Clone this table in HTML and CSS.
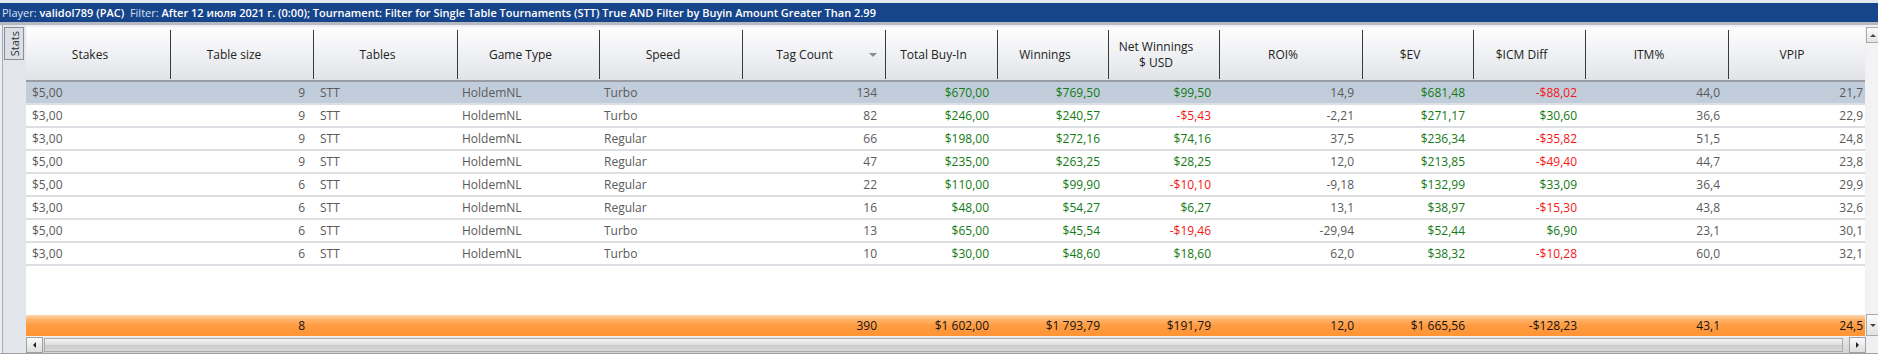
FILE: index.html
```html
<!DOCTYPE html>
<html>
<head>
<meta charset="utf-8">
<link rel="stylesheet" href="styles.css">
</head>
<body>
<div class="app">
  <div class="topstrip"></div>
  <div class="titlebar"><span class="k">Player:</span> <b>validol789 (PAC)</b>&nbsp;&nbsp;<span class="k">Filter:</span> <b>After 12 июля 2021 г. (0:00); Tournament: Filter for Single Table Tournaments (STT) True AND Filter by Buyin Amount Greater Than 2.99</b></div>
  <div class="main">
    <div class="sidebar"><div class="tab"><span>Stats</span></div></div>
    <div class="gridwrap">
      <div class="gridarea">
        <div class="table">
          <div class="row head">
            <div class="h">Stakes</div>
            <div class="h">Table size</div>
            <div class="h">Tables</div>
            <div class="h">Game Type</div>
            <div class="h">Speed</div>
            <div class="h sort">Tag Count<i class="arrow"></i></div>
            <div class="h">Total Buy-In</div>
            <div class="h">Winnings</div>
            <div class="h">Net Winnings<br>$ USD</div>
            <div class="h">ROI%</div>
            <div class="h">$EV</div>
            <div class="h">$ICM Diff</div>
            <div class="h">ITM%</div>
            <div class="h last">VPIP</div>
          </div>

          <div class="row data sel">
            <div class="t">$5,00</div><div class="n">9</div><div class="t">STT</div><div class="t p4">HoldemNL</div><div class="t p4">Turbo</div><div class="n">134</div>
            <div class="n g">$670,00</div><div class="n g">$769,50</div><div class="n g">$99,50</div><div class="n">14,9</div><div class="n g">$681,48</div><div class="n r">-$88,02</div><div class="n">44,0</div><div class="n">21,7</div>
          </div>
          <div class="row data">
            <div class="t">$3,00</div><div class="n">9</div><div class="t">STT</div><div class="t p4">HoldemNL</div><div class="t p4">Turbo</div><div class="n">82</div>
            <div class="n g">$246,00</div><div class="n g">$240,57</div><div class="n r">-$5,43</div><div class="n">-2,21</div><div class="n g">$271,17</div><div class="n g">$30,60</div><div class="n">36,6</div><div class="n">22,9</div>
          </div>
          <div class="row data">
            <div class="t">$3,00</div><div class="n">9</div><div class="t">STT</div><div class="t p4">HoldemNL</div><div class="t p4">Regular</div><div class="n">66</div>
            <div class="n g">$198,00</div><div class="n g">$272,16</div><div class="n g">$74,16</div><div class="n">37,5</div><div class="n g">$236,34</div><div class="n r">-$35,82</div><div class="n">51,5</div><div class="n">24,8</div>
          </div>
          <div class="row data">
            <div class="t">$5,00</div><div class="n">9</div><div class="t">STT</div><div class="t p4">HoldemNL</div><div class="t p4">Regular</div><div class="n">47</div>
            <div class="n g">$235,00</div><div class="n g">$263,25</div><div class="n g">$28,25</div><div class="n">12,0</div><div class="n g">$213,85</div><div class="n r">-$49,40</div><div class="n">44,7</div><div class="n">23,8</div>
          </div>
          <div class="row data">
            <div class="t">$5,00</div><div class="n">6</div><div class="t">STT</div><div class="t p4">HoldemNL</div><div class="t p4">Regular</div><div class="n">22</div>
            <div class="n g">$110,00</div><div class="n g">$99,90</div><div class="n r">-$10,10</div><div class="n">-9,18</div><div class="n g">$132,99</div><div class="n g">$33,09</div><div class="n">36,4</div><div class="n">29,9</div>
          </div>
          <div class="row data">
            <div class="t">$3,00</div><div class="n">6</div><div class="t">STT</div><div class="t p4">HoldemNL</div><div class="t p4">Regular</div><div class="n">16</div>
            <div class="n g">$48,00</div><div class="n g">$54,27</div><div class="n g">$6,27</div><div class="n">13,1</div><div class="n g">$38,97</div><div class="n r">-$15,30</div><div class="n">43,8</div><div class="n">32,6</div>
          </div>
          <div class="row data">
            <div class="t">$5,00</div><div class="n">6</div><div class="t">STT</div><div class="t p4">HoldemNL</div><div class="t p4">Turbo</div><div class="n">13</div>
            <div class="n g">$65,00</div><div class="n g">$45,54</div><div class="n r">-$19,46</div><div class="n">-29,94</div><div class="n g">$52,44</div><div class="n g">$6,90</div><div class="n">23,1</div><div class="n">30,1</div>
          </div>
          <div class="row data">
            <div class="t">$3,00</div><div class="n">6</div><div class="t">STT</div><div class="t p4">HoldemNL</div><div class="t p4">Turbo</div><div class="n">10</div>
            <div class="n g">$30,00</div><div class="n g">$48,60</div><div class="n g">$18,60</div><div class="n">62,0</div><div class="n g">$38,32</div><div class="n r">-$10,28</div><div class="n">60,0</div><div class="n">32,1</div>
          </div>

          <div class="fill"></div>

          <div class="row foot">
            <div></div><div class="n">8</div><div></div><div></div><div></div><div class="n">390</div>
            <div class="n">$1&nbsp;602,00</div><div class="n">$1&nbsp;793,79</div><div class="n">$191,79</div><div class="n">12,0</div><div class="n">$1&nbsp;665,56</div><div class="n">-$128,23</div><div class="n">43,1</div><div class="n">24,5</div>
          </div>
        </div>
        <div class="vscroll">
          <div class="vbtn"><i class="tri up"></i></div>
          <div class="vtrack"></div>
          <div class="vbtn down"><i class="tri dn"></i></div>
        </div>
      </div>
      <div class="hscroll">
        <div class="hbtn"><i class="tri lf"></i></div>
        <div class="thumb"></div>
        <div class="hbtn"><i class="tri rt"></i></div>
      </div>
    </div>
  </div>
</div>
</body>
</html>
```

FILE: styles.css
```css
* { box-sizing: border-box; margin: 0; padding: 0; }
html, body { width: 1878px; height: 354px; overflow: hidden; }
body {
  background: #eceef2;
  font-family: "Open Sans", "Noto Sans", sans-serif;
  font-size: 12px;
  color: #5a5a5a;
}
.app { display: flex; flex-direction: column; height: 354px; }
.topstrip { height: 3px; background: #e4e8ee; flex: none; }
.titlebar {
  flex: none;
  height: 22px;
  background: #17458b;
  border-bottom: 3px solid #b6bac0;
  color: #fff;
  font-size: 11px;
  line-height: 19px;
  padding-left: 2px;
  white-space: nowrap;
  overflow: hidden;
}
.titlebar .k { color: #d6e0f0; font-weight: 400; }
.titlebar b { font-weight: 600; }

.main { display: flex; flex: 1; min-height: 0; border-bottom: 1px solid #9c9fa4; }
.sidebar {
  flex: none;
  width: 24px;
  margin-left: 2px;
  border-left: 1px solid #a9adb3;
  background: #e3e6eb;
  padding: 2px 0 0 1px;
}
.tab {
  width: 20px;
  height: 33px;
  border: 1px solid #8c9096;
  background: #dcdfe5;
  display: flex;
  align-items: center;
  justify-content: center;
}
.tab span {
  writing-mode: vertical-rl;
  transform: rotate(180deg);
  font-size: 11px;
  line-height: 1;
  color: #333;
}

.gridwrap { flex: 1; min-width: 0; display: flex; flex-direction: column; padding-top: 2px; background: #eef0f3; }
.gridarea { display: flex; gap: 1px; height: 309px; flex: none; }
.table { flex: 1; min-width: 0; display: flex; flex-direction: column; background: #fff; overflow: hidden; }

.row {
  display: grid;
  grid-template-columns: 145px 143px 144px 142px 143px 143px 112px 111px 111px 143px 111px 112px 143px 143px;
  flex: none;
}
.head {
  height: 55px;
  border-bottom: 2px solid #999ca2;
  background: linear-gradient(#fefefe, #f3f4f6 40%, #e1e3e7);
}
.head .h {
  position: relative;
  display: flex;
  align-items: center;
  justify-content: center;
  text-align: center;
  color: #222;
  line-height: 16px;
  padding: 2px 17px 0 0;
}
.head .h::after {
  content: "";
  position: absolute;
  right: 0;
  top: 3px;
  bottom: 1px;
  width: 1px;
  background: #3a3a3a;
}
.head .h.last::after { display: none; }
.head .sort { padding-right: 20px; }
.arrow {
  position: absolute;
  right: 9px;
  top: 26px;
  width: 0;
  height: 0;
  border-left: 4px solid transparent;
  border-right: 4px solid transparent;
  border-top: 4px solid #8c8c8c;
}

.data { height: 23px; border-bottom: 2px solid #dcdfe3; }
.data > div, .foot > div { white-space: nowrap; line-height: 21px; overflow: hidden; }
.t { padding-left: 6px; }
.t.p4 { padding-left: 4px; }
.n { text-align: right; padding-right: 9px; }
.g { color: #137a13; }
.r { color: #f51515; }
.sel { background: #c1cdda; }

.fill { flex: 1; }
.foot {
  height: 21px;
  background: linear-gradient(#ffd7b0 0%, #ffb36a 22%, #ff9c42 50%, #ff9434 100%);
  color: #141414;
}

.vscroll { width: 12px; flex: none; display: flex; flex-direction: column; background: #f3f3f3; }
.vbtn {
  height: 16px;
  flex: none;
  border: 1px solid #a9a9a9;
  border-right: none;
  background: linear-gradient(#fbfbfb, #e2e2e2);
  display: flex;
  align-items: center;
  justify-content: center;
}
.vbtn.down { height: 22px; margin-bottom: 0; }
.vtrack { flex: 1; }

.hscroll {
  flex: none;
  height: 16px;
  margin: 1px 12px 0 0;
  display: flex;
  background: linear-gradient(#e9e9e9, #d3d3d3);
}
.hbtn {
  width: 17px;
  flex: none;
  border: 1px solid #a3a3a3;
  background: linear-gradient(#fafafa, #dedede);
  display: flex;
  align-items: center;
  justify-content: center;
}
.thumb {
  flex: 1;
  margin: 1px 6px 1px 1px;
  border: 1px solid #ababab;
  background: linear-gradient(#f3f3f3, #e0e0e0 45%, #cbcbcb 55%, #d8d8d8);
}
.tri { display: block; width: 0; height: 0; }
.tri.up { border-left: 3px solid transparent; border-right: 3px solid transparent; border-bottom: 3px solid #444; }
.tri.dn { border-left: 3px solid transparent; border-right: 3px solid transparent; border-top: 3px solid #444; }
.tri.lf { border-top: 3px solid transparent; border-bottom: 3px solid transparent; border-right: 3px solid #222; }
.tri.rt { border-top: 3px solid transparent; border-bottom: 3px solid transparent; border-left: 3px solid #222; }
```
